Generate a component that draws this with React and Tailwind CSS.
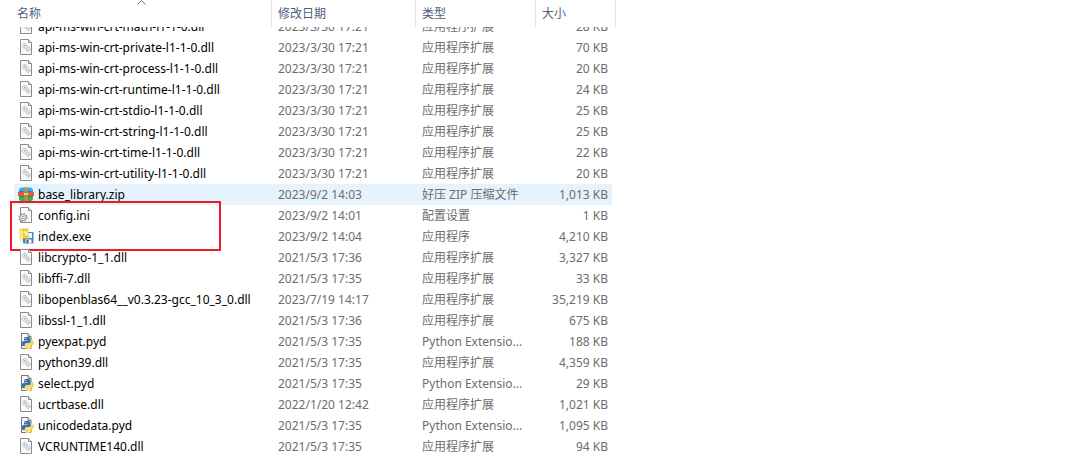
import React from "react";

const files = [
  { name: "api-ms-win-crt-math-l1-1-0.dll", date: "2023/3/30 17:21", type: "应用程序扩展", size: "28 KB", icon: "dll", clipped: true },
  { name: "api-ms-win-crt-private-l1-1-0.dll", date: "2023/3/30 17:21", type: "应用程序扩展", size: "70 KB", icon: "dll" },
  { name: "api-ms-win-crt-process-l1-1-0.dll", date: "2023/3/30 17:21", type: "应用程序扩展", size: "20 KB", icon: "dll" },
  { name: "api-ms-win-crt-runtime-l1-1-0.dll", date: "2023/3/30 17:21", type: "应用程序扩展", size: "24 KB", icon: "dll" },
  { name: "api-ms-win-crt-stdio-l1-1-0.dll", date: "2023/3/30 17:21", type: "应用程序扩展", size: "25 KB", icon: "dll" },
  { name: "api-ms-win-crt-string-l1-1-0.dll", date: "2023/3/30 17:21", type: "应用程序扩展", size: "25 KB", icon: "dll" },
  { name: "api-ms-win-crt-time-l1-1-0.dll", date: "2023/3/30 17:21", type: "应用程序扩展", size: "22 KB", icon: "dll" },
  { name: "api-ms-win-crt-utility-l1-1-0.dll", date: "2023/3/30 17:21", type: "应用程序扩展", size: "20 KB", icon: "dll" },
  { name: "base_library.zip", date: "2023/9/2 14:03", type: "好压 ZIP 压缩文件", size: "1,013 KB", icon: "zip", hovered: true },
  { name: "config.ini", date: "2023/9/2 14:01", type: "配置设置", size: "1 KB", icon: "ini", marked: true },
  { name: "index.exe", date: "2023/9/2 14:04", type: "应用程序", size: "4,210 KB", icon: "exe" },
  { name: "libcrypto-1_1.dll", date: "2021/5/3 17:36", type: "应用程序扩展", size: "3,327 KB", icon: "dll" },
  { name: "libffi-7.dll", date: "2021/5/3 17:35", type: "应用程序扩展", size: "33 KB", icon: "dll" },
  { name: "libopenblas64__v0.3.23-gcc_10_3_0.dll", date: "2023/7/19 14:17", type: "应用程序扩展", size: "35,219 KB", icon: "dll" },
  { name: "libssl-1_1.dll", date: "2021/5/3 17:36", type: "应用程序扩展", size: "675 KB", icon: "dll" },
  { name: "pyexpat.pyd", date: "2021/5/3 17:35", type: "Python Extensio...", size: "188 KB", icon: "pyd" },
  { name: "python39.dll", date: "2021/5/3 17:35", type: "应用程序扩展", size: "4,359 KB", icon: "dll" },
  { name: "select.pyd", date: "2021/5/3 17:35", type: "Python Extensio...", size: "29 KB", icon: "pyd" },
  { name: "ucrtbase.dll", date: "2022/1/20 12:42", type: "应用程序扩展", size: "1,021 KB", icon: "dll" },
  { name: "unicodedata.pyd", date: "2021/5/3 17:35", type: "Python Extensio...", size: "1,095 KB", icon: "pyd" },
  { name: "VCRUNTIME140.dll", date: "2021/5/3 17:35", type: "应用程序扩展", size: "94 KB", icon: "dll" },
];

const Page = () => (
  <>
    <path d="M2.5.5h8l3 3v12h-11z" fill="#fafafa" stroke="#8c8c8c" />
    <path d="M10.5.5v3h3" fill="#e4e4e4" stroke="#8c8c8c" />
  </>
);

const icons = {
  dll: (
    <>
      <Page />
      <circle cx="6.7" cy="6.8" r="2.3" fill="#f2f3f4" stroke="#a4a9ae" strokeDasharray="1.2 .5" />
      <circle cx="6.7" cy="6.8" r=".7" fill="#8d949b" />
      <circle cx="10.2" cy="10.3" r="2" fill="#e3f0f8" stroke="#8fb9d2" strokeDasharray="1.1 .5" />
      <circle cx="10.2" cy="10.3" r=".6" fill="#7fabc5" />
    </>
  ),
  ini: (
    <>
      <Page />
      <circle cx="5" cy="10.500" r="3.900" fill="none" stroke="#8f9499" strokeWidth="1.4" strokeDasharray="1.6 1.46" />
      <circle cx="5" cy="10.500" r="3.100" fill="#e8eaec" stroke="#a0a4a8" />
      <circle cx="5" cy="10.500" r="1.200" fill="#fff" stroke="#969ba0" strokeWidth=".8" />
    </>
  ),
  zip: (
    <>
      <path d="M1 6V4.500Q1 1.500 4 1.500h8q3 0 3 3V6z" fill="#38aee6" />
      <path d="M1 5h14v1H1z" fill="#2588c4" />
      <path d="M0 6h16v4H0z" fill="#e8583c" />
      <path d="M1 10h14v3q0 2-2 2H3q-2 0-2-2z" fill="#3fae57" />
      <path d="M1 10h14v1H1z" fill="#2a8d49" />
      <path d="M6.500 1.500h3V15h-3z" fill="#d08a4a" />
      <path d="M5.500 6.500h5v3h-5z" fill="#f8e3a4" stroke="#9a6734" strokeWidth=".7" />
      <path d="M7.500 7.500h1v1h-1z" fill="#8b5b2c" />
    </>
  ),
  exe: (
    <>
      <path d="M5 4h10.500v11.500H6L5 14.500z" fill="#4585c4" />
      <path d="M6 5h8v5H6z" fill="#eaf4fd" />
      <path d="M7.500 11.500h6v4h-6z" fill="#f0f3f6" />
      <path d="M8.500 12h2v3.500h-2z" fill="#2f5f96" />
      <path d="M1 .5h9.500v10H1z" fill="#f3c93f" />
      <path d="M1 .5l4 2.500v11L1 12z" fill="#fbe892" />
      <path d="M6.500 5.500V4h2.500v2.500H7.500v1" fill="none" stroke="#fffbe0" strokeWidth="1.2" />
    </>
  ),
  pyd: (
    <>
      <path d="M3.500.5h6.500l3 3v12H3.500z" fill="#fafafa" stroke="#777" />
      <path d="M10 .5v3h3" fill="#e4e4e4" stroke="#777" />
      <path d="M7.500 4h3Q12.500 4 12.500 5.800v2.700q0 1.700-1.700 1.700H8.500q-1.700 0-1.700 1.700v1.300H5.500q-2 0-2-2.500 0-2.700 2-2.700h4v-.6H6V5.700Q6 4 7.500 4z" fill="#3775a9" />
      <path d="M13 7h1q2 0 2 2.700 0 2.600-2 2.600h-4v.6h3v1.300q0 1.800-2 1.800H9q-1.800 0-1.800-1.800v-2q0-1.500 1.600-1.500h2.500Q13 10.700 13 9z" fill="#ffd94c" />
      <circle cx="7.500" cy="5.500" r=".6" fill="#fff" />
      <circle cx="11.500" cy="14.500" r=".6" fill="#fff" />
    </>
  ),
};

const FileIcon = ({ kind }) => (
  <svg className="mt-0.5 h-4 w-4 shrink-0 self-start" viewBox="0 0 16 16" aria-hidden="true">
    {icons[kind]}
  </svg>
);

const Cell = ({ file, className, children }) => (
  <div className={`flex overflow-hidden ${file.clipped ? "h-[10px] items-end" : "h-[21px] items-center"} ${file.hovered ? "bg-[#e5f3ff]" : ""}`}>
    <div className={`flex h-[21px] w-full shrink-0 items-center whitespace-nowrap ${className}`}>
      {children}
    </div>
  </div>
);

const FileRow = ({ file }) => (
  <tr className="text-[#6d6d6d]">
    <td className="relative p-0 text-black">
      <Cell file={file} className="gap-1 pl-1">
        <FileIcon kind={file.icon} />
        <span>{file.name}</span>
      </Cell>
      {file.marked && (
        <div className="absolute -top-1 -left-1 h-[50px] w-[211px] border-2 border-[#ed1c24]" />
      )}
    </td>
    <td className="p-0">
      <Cell file={file} className="pl-1.5">{file.date}</Cell>
    </td>
    <td className="p-0">
      <Cell file={file} className="pl-1.5">{file.type}</Cell>
    </td>
    <td className="p-0 pr-1">
      <Cell file={file} className="justify-end pr-1">{file.size}</Cell>
    </td>
  </tr>
);

const HeaderCell = ({ className, sorted, children }) => (
  <th scope="col" className={`relative h-[27px] border-r border-[#e5e5e5] p-0 text-left font-normal ${className}`}>
    <button type="button" className="block w-full text-left">{children}</button>
    {sorted && (
      <svg className="absolute top-0 left-[123px] h-[5px] w-[9px]" viewBox="0 0 9 5" aria-hidden="true">
        <path d="M.5 4.500l4-4 4 4" fill="none" stroke="#6d6d6d" />
      </svg>
    )}
  </th>
);

const App = () => {
  return (
    <main className="min-h-screen overflow-hidden bg-white pl-3.5 font-['Noto_Sans','Noto_Sans_CJK_SC',sans-serif] text-xs">
      <table className="w-[602px] table-fixed border-separate border-spacing-0">
        <thead className="text-[#4c607a]">
          <tr>
            <HeaderCell className="w-[258px] pl-[3px]" sorted>名称</HeaderCell>
            <HeaderCell className="w-36 pl-1.5">修改日期</HeaderCell>
            <HeaderCell className="w-[120px] pl-1.5">类型</HeaderCell>
            <HeaderCell className="w-20 pl-1.5">大小</HeaderCell>
          </tr>
        </thead>
        <tbody>
          {files.map((file) => (
            <FileRow key={file.name} file={file} />
          ))}
        </tbody>
      </table>
    </main>
  );
};

export default App;
